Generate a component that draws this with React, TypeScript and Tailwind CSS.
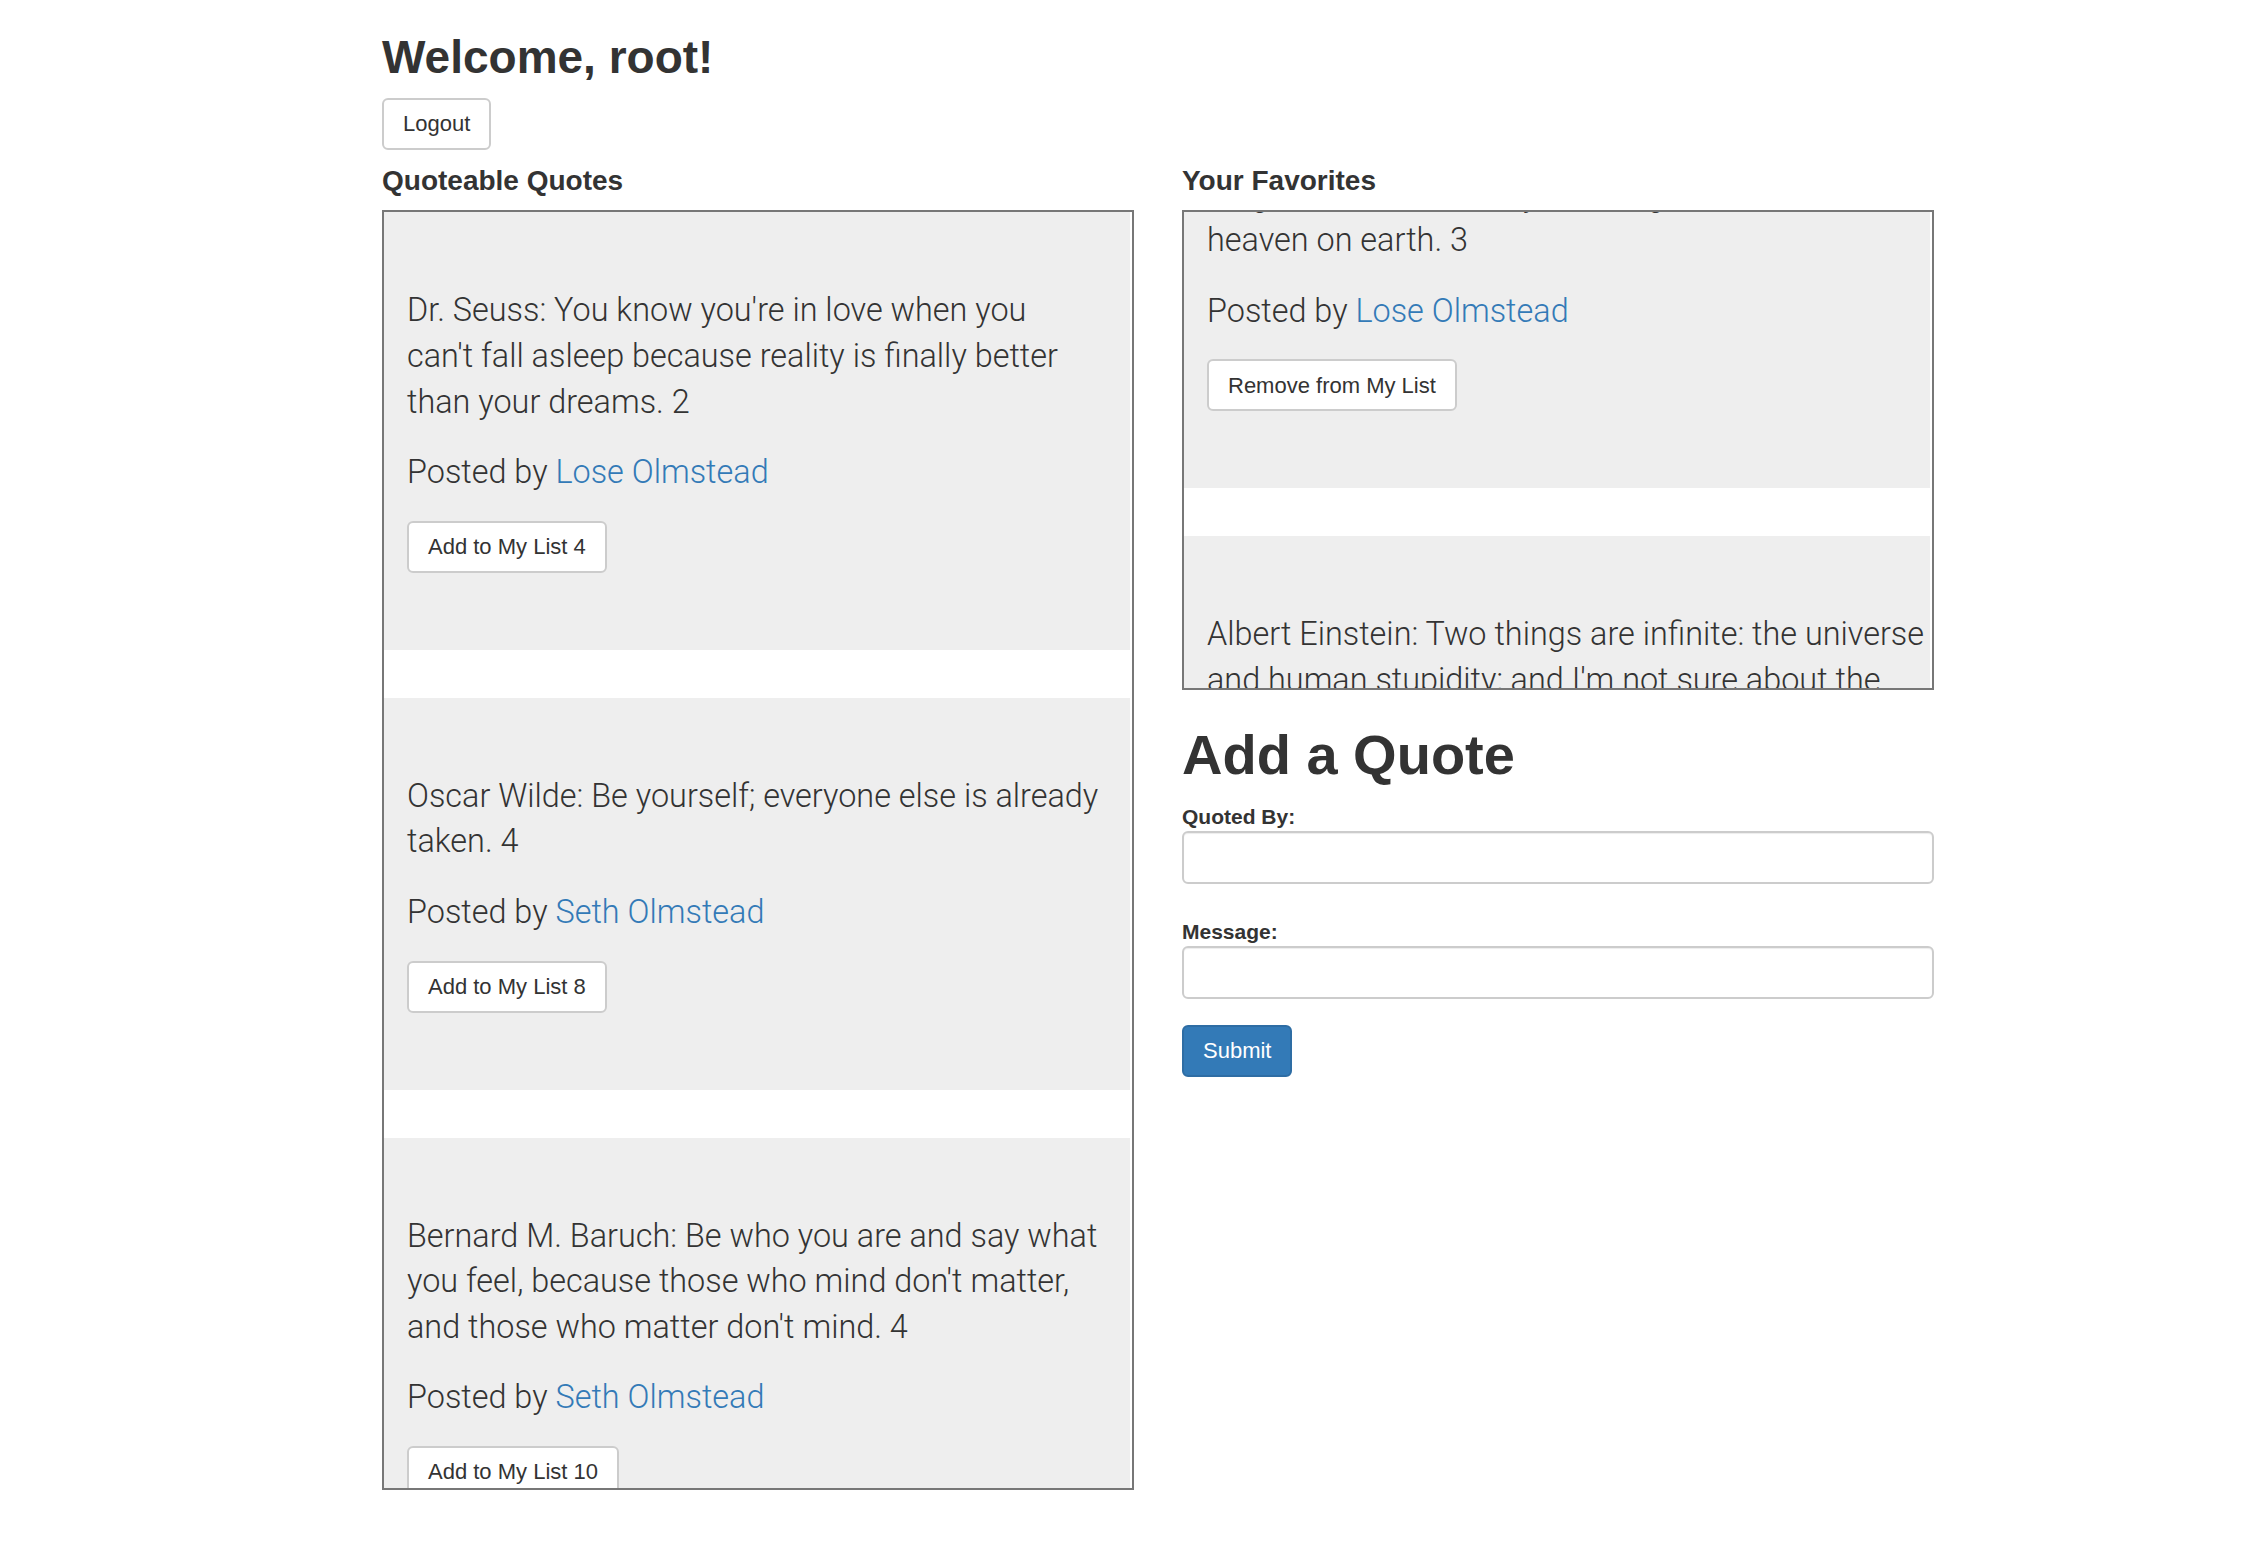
import { useLayoutEffect, useRef } from "react"

type Quote = {
    lines: string[]
    author: string
    action: string
}

const quotes: Quote[] = [
    {
        lines: [
            "Dr. Seuss: You know you're in love when you",
            "can't fall asleep because reality is finally better",
            "than your dreams. 2",
        ],
        author: "Lose Olmstead",
        action: "Add to My List 4",
    },
    {
        lines: ["Oscar Wilde: Be yourself; everyone else is already", "taken. 4"],
        author: "Seth Olmstead",
        action: "Add to My List 8",
    },
    {
        lines: [
            "Bernard M. Baruch: Be who you are and say what",
            "you feel, because those who mind don't matter,",
            "and those who matter don't mind. 4",
        ],
        author: "Seth Olmstead",
        action: "Add to My List 10",
    },
]

const favorites: Quote[] = [
    {
        lines: [
            "William W. Purkey: You've gotta dance like there's",
            "nobody watching, Love like you'll never be hurt,",
            "Sing like there's nobody listening, And live like it's",
            "heaven on earth. 3",
        ],
        author: "Lose Olmstead",
        action: "Remove from My List",
    },
    {
        lines: [
            "Albert Einstein: Two things are infinite: the universe",
            "and human stupidity; and I'm not sure about the",
            "universe. 5",
        ],
        author: "Seth Olmstead",
        action: "Remove from My List",
    },
]

const QuoteCard = ({ quote }: { quote: Quote }) => {
    const { lines, author, action } = quote
    return (
        <div className="-ml-[2px] mb-[48px] w-full bg-[#eee] pt-[76px] pb-[77px] pl-[25px] pr-[23px]">
            <p className="whitespace-nowrap font-['Roboto',sans-serif] text-[32.4px] font-light leading-[45.6px]">
                {lines.map((line) => (
                    <span key={line} className="block">
                        {line}
                    </span>
                ))}
            </p>
            <p className="mt-[25px] font-['Roboto',sans-serif] text-[32.4px] font-light leading-[45.6px]">
                Posted by <a href="#" className="text-[#337ab7]">{author}</a>
            </p>
            <button className="mt-[25px] flex h-[52px] items-center rounded-[6px] border-2 border-[#ccc] bg-white px-[19px] text-[22px] text-[#333]">
                {action}
            </button>
        </div>
    )
}

const App = () => {
    const favRef = useRef<HTMLDivElement>(null)

    useLayoutEffect(() => {
        if (favRef.current) favRef.current.scrollTop = 207
    }, [])

    return (
        <div className="min-h-screen bg-white font-['Liberation_Sans',Arial,sans-serif] text-[#333]">
            <div className="ml-[382px] w-[1552px] pt-[32px]">
                <h2 className="text-[46px] font-bold leading-[1.1]">Welcome, root!</h2>
                <button className="mt-[15px] flex h-[52px] items-center rounded-[6px] border-2 border-[#ccc] bg-white px-[19px] text-[22px]">
                    Logout
                </button>

                <div className="mt-[16px] grid grid-cols-[752px_752px] gap-[48px]">
                    <section>
                        <h4 className="mb-[14px] text-[28px] font-bold leading-[1.1]">Quoteable Quotes</h4>
                        <div className="h-[1280px] overflow-hidden border-2 border-[#777]">
                            {quotes.map((q) => (
                                <QuoteCard key={q.action} quote={q} />
                            ))}
                        </div>
                    </section>

                    <section>
                        <h4 className="mb-[14px] text-[28px] font-bold leading-[1.1]">Your Favorites</h4>
                        <div ref={favRef} className="h-[480px] overflow-hidden border-2 border-[#777]">
                            {favorites.map((q) => (
                                <QuoteCard key={q.lines[0]} quote={q} />
                            ))}
                        </div>

                        <h1 className="mt-[34px] text-[56px] font-bold leading-[1.1]">Add a Quote</h1>
                        <form onSubmit={(e) => e.preventDefault()}>
                            <label className="mt-[19px] mb-[2px] block text-[21px] font-bold leading-[24px]">Quoted By:</label>
                            <input
                                type="text"
                                className="block h-[53px] w-full rounded-[6px] border-2 border-[#ccc] bg-white px-[19px] text-[22px] shadow-[inset_0_1px_1px_rgba(0,0,0,0.075)]"
                            />
                            <label className="mt-[36px] mb-[2px] block text-[21px] font-bold leading-[24px]">Message:</label>
                            <input
                                type="text"
                                className="block h-[53px] w-full rounded-[6px] border-2 border-[#ccc] bg-white px-[19px] text-[22px] shadow-[inset_0_1px_1px_rgba(0,0,0,0.075)]"
                            />
                            <button
                                type="submit"
                                className="mt-[26px] flex h-[52px] items-center rounded-[6px] border-2 border-[#2e6da4] bg-[#337ab7] px-[19px] text-[22px] text-white"
                            >
                                Submit
                            </button>
                        </form>
                    </section>
                </div>
            </div>
        </div>
    )
}

export default App
